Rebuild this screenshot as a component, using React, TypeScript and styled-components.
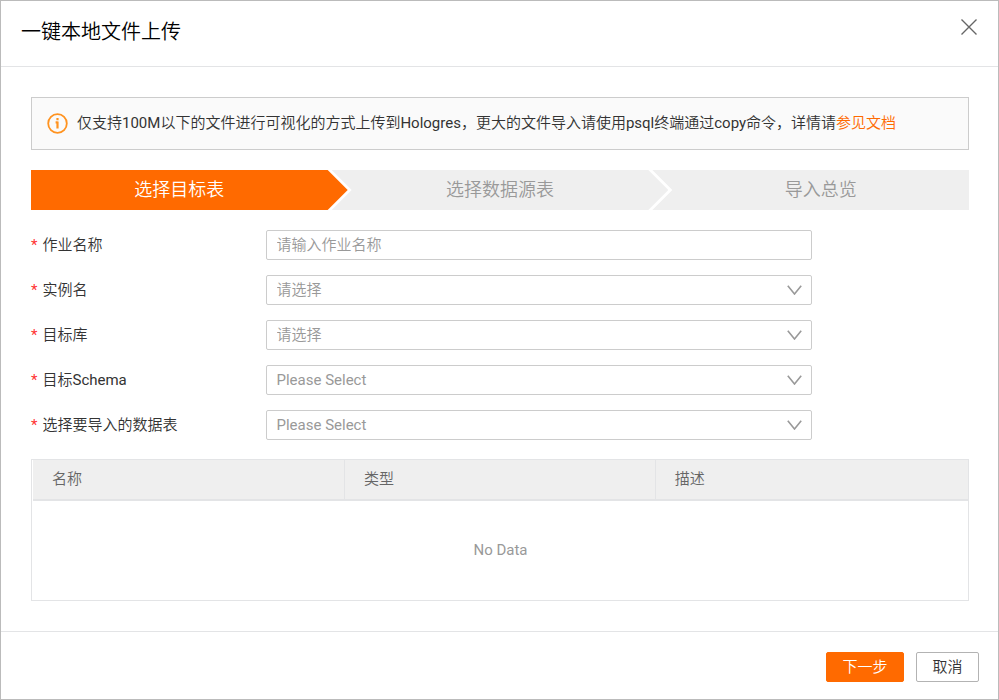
import React from "react";
import styled, { createGlobalStyle, css } from "styled-components";

const GlobalStyle = createGlobalStyle`
  *, *::before, *::after { box-sizing: border-box; }
  body {
    margin: 0;
    background: #fff;
    color: #333;
    font: 400 15px/20px Roboto, "Noto Sans CJK SC DemiLight", "Noto Sans CJK SC", sans-serif;
  }
  button, input, select { font: inherit; }
`;

const Dialog = styled.section`
  display: flex;
  flex-direction: column;
  min-height: 100vh;
  border: 1px solid #bbb;
  background: #fff;
`;

const Header = styled.header`
  display: flex;
  align-items: flex-start;
  justify-content: space-between;
  padding: 16px 20px 18px;
  border-bottom: 1px solid #e3e4e6;
`;

const Title = styled.h1`
  margin: 0;
  color: #000;
  font-size: 20px;
  font-weight: 400;
  line-height: 31px;
`;

const CloseButton = styled.button`
  display: flex;
  padding: 1px 0;
  border: 0;
  background: none;
  cursor: pointer;
`;

const Body = styled.main`
  flex: 1;
  padding: 30px 29px 30px 30px;
`;

const Notice = styled.div`
  display: flex;
  align-items: center;
  gap: 9px;
  min-height: 53px;
  padding: 8px 15px;
  border: 1px solid #ccc;
  background: #fafafa;
`;

const NoticeText = styled.p`
  margin: 0;
  padding-bottom: 2px;
`;

const DocLink = styled.a`
  color: #ff6a00;
  text-decoration: none;
`;

const Steps = styled.ol`
  display: flex;
  margin: 20px 0;
  padding: 0;
  list-style: none;
`;

const Step = styled.li<{ $active?: boolean }>`
  flex: 1 1 0;
  padding: 0 20px;
  background: ${(p) => (p.$active ? "#ff6a00" : "#efefef")};
  color: ${(p) => (p.$active ? "#fff" : "#999")};
  font-size: 18px;
  line-height: 40px;
  text-align: center;
  clip-path: polygon(0 0, calc(100% - 20px) 0, 100% 50%, calc(100% - 20px) 100%, 0 100%, 20px 50%);

  & + & { margin-left: -16px; }
  &:first-child {
    padding-left: 0;
    clip-path: polygon(0 0, calc(100% - 20px) 0, 100% 50%, calc(100% - 20px) 100%, 0 100%);
  }
  &:last-child {
    padding-right: 0;
    clip-path: polygon(0 0, 100% 0, 100% 100%, 0 100%, 20px 50%);
  }
`;

const Form = styled.form`
  display: grid;
  gap: 15px;
`;

const Field = styled.div`
  display: grid;
  grid-template-columns: 25% 58.3%;
  align-items: center;
`;

const Label = styled.label`
  display: flex;
  gap: 5px;
`;

const Required = styled.span`
  color: #ff3333;
`;

const control = css`
  width: 100%;
  height: 30px;
  padding: 0 10px;
  border: 1px solid #ccc;
  border-radius: 2px;
  background: #fff;
  color: #999;
`;

const TextInput = styled.input`
  ${control}
  &::placeholder { color: #999; opacity: 1; }
`;

const SelectBox = styled.div`
  display: grid;
  align-items: center;
  > * { grid-area: 1 / 1; }
  > svg {
    justify-self: end;
    margin-right: 10px;
    pointer-events: none;
  }
`;

const Select = styled.select`
  ${control}
  appearance: none;
`;

const TableFrame = styled.div`
  margin-top: 19px;
  padding-left: 1px;
  border: 1px solid #e3e4e6;
`;

const Table = styled.table`
  width: 100%;
  border-collapse: separate;
  border-spacing: 0;
  table-layout: fixed;
`;

const HeadCell = styled.th`
  height: 41px;
  padding: 0 19px 2px;
  border-bottom: 2px solid #e3e4e6;
  background: #efefef;
  color: #666;
  font-weight: 400;
  text-align: left;
  &:not(:last-child) { width: 33.25%; }
  & + & { border-left: 1px solid #e3e4e6; }
`;

const EmptyCell = styled.td`
  height: 99px;
  padding: 0 0 2px;
  color: #999;
  text-align: center;
`;

const Footer = styled.footer`
  display: flex;
  justify-content: flex-end;
  gap: 12px;
  padding: 20px 19px 17px;
  border-top: 1px solid #e3e4e6;
`;

const Button = styled.button<{ $primary?: boolean }>`
  min-width: ${(p) => (p.$primary ? "78px" : "63px")};
  height: 30px;
  padding: 0 15px;
  border: 1px solid ${(p) => (p.$primary ? "#ff6a00" : "#b3b3b3")};
  border-radius: 2px;
  background: ${(p) => (p.$primary ? "#ff6a00" : "#fff")};
  color: ${(p) => (p.$primary ? "#fff" : "#333")};
  line-height: 20px;
  cursor: pointer;
`;

const CloseIcon = () => (
  <svg width="18" height="18" viewBox="0 0 18 18" fill="none" stroke="#666" strokeWidth="1.4" aria-hidden="true">
    <path d="M1.5 1.5 16.5 16.5M16.5 1.5 1.5 16.5" />
  </svg>
);

const InfoIcon = () => (
  <svg width="21" height="21" viewBox="0 0 21 21" fill="none" stroke="#ff9320" aria-hidden="true">
    <circle cx="10.5" cy="10.5" r="9.3" strokeWidth="1.8" />
    <path d="M8.6 9.4h2M10.5 8.6v7M10.5 4.9v2.3" strokeWidth="2.2" />
  </svg>
);

const ChevronIcon = () => (
  <svg width="15" height="10" viewBox="0 0 15 10" fill="none" stroke="#999" strokeWidth="1.6" aria-hidden="true">
    <path d="M.8 .8 7.5 9 14.2 .8" />
  </svg>
);

const steps = ["选择目标表", "选择数据源表", "导入总览"];
const columns = ["名称", "类型", "描述"];
const selects = [
  { id: "instance", label: "实例名", placeholder: "请选择" },
  { id: "database", label: "目标库", placeholder: "请选择" },
  { id: "schema", label: "目标Schema", placeholder: "Please Select" },
  { id: "source", label: "选择要导入的数据表", placeholder: "Please Select" },
];

const FieldLabel = ({ id, text }: { id: string; text: string }) => (
  <Label htmlFor={id}>
    <Required>*</Required>
    {text}
  </Label>
);

export default function App() {
  return (
    <>
      <GlobalStyle />
      <Dialog role="dialog" aria-labelledby="title">
        <Header>
          <Title id="title">一键本地文件上传</Title>
          <CloseButton type="button" aria-label="关闭">
            <CloseIcon />
          </CloseButton>
        </Header>
        <Body>
          <Notice>
            <InfoIcon />
            <NoticeText>
              仅支持100M以下的文件进行可视化的方式上传到Hologres，更大的文件导入请使用psql终端通过copy命令，详情请<DocLink href="#docs">参见文档</DocLink>
            </NoticeText>
          </Notice>
          <Steps>
            {steps.map((step, i) => (
              <Step key={step} $active={i === 0} aria-current={i === 0 ? "step" : undefined}>
                {step}
              </Step>
            ))}
          </Steps>
          <Form id="upload">
            <Field>
              <FieldLabel id="job" text="作业名称" />
              <TextInput id="job" type="text" placeholder="请输入作业名称" />
            </Field>
            {selects.map(({ id, label, placeholder }) => (
              <Field key={id}>
                <FieldLabel id={id} text={label} />
                <SelectBox>
                  <Select id={id} defaultValue="">
                    <option value="">{placeholder}</option>
                  </Select>
                  <ChevronIcon />
                </SelectBox>
              </Field>
            ))}
          </Form>
          <TableFrame>
            <Table>
              <thead>
                <tr>
                  {columns.map((name) => (
                    <HeadCell key={name} scope="col">{name}</HeadCell>
                  ))}
                </tr>
              </thead>
              <tbody>
                <tr>
                  <EmptyCell colSpan={columns.length}>No Data</EmptyCell>
                </tr>
              </tbody>
            </Table>
          </TableFrame>
        </Body>
        <Footer>
          <Button type="submit" form="upload" $primary>下一步</Button>
          <Button type="button">取消</Button>
        </Footer>
      </Dialog>
    </>
  );
}
